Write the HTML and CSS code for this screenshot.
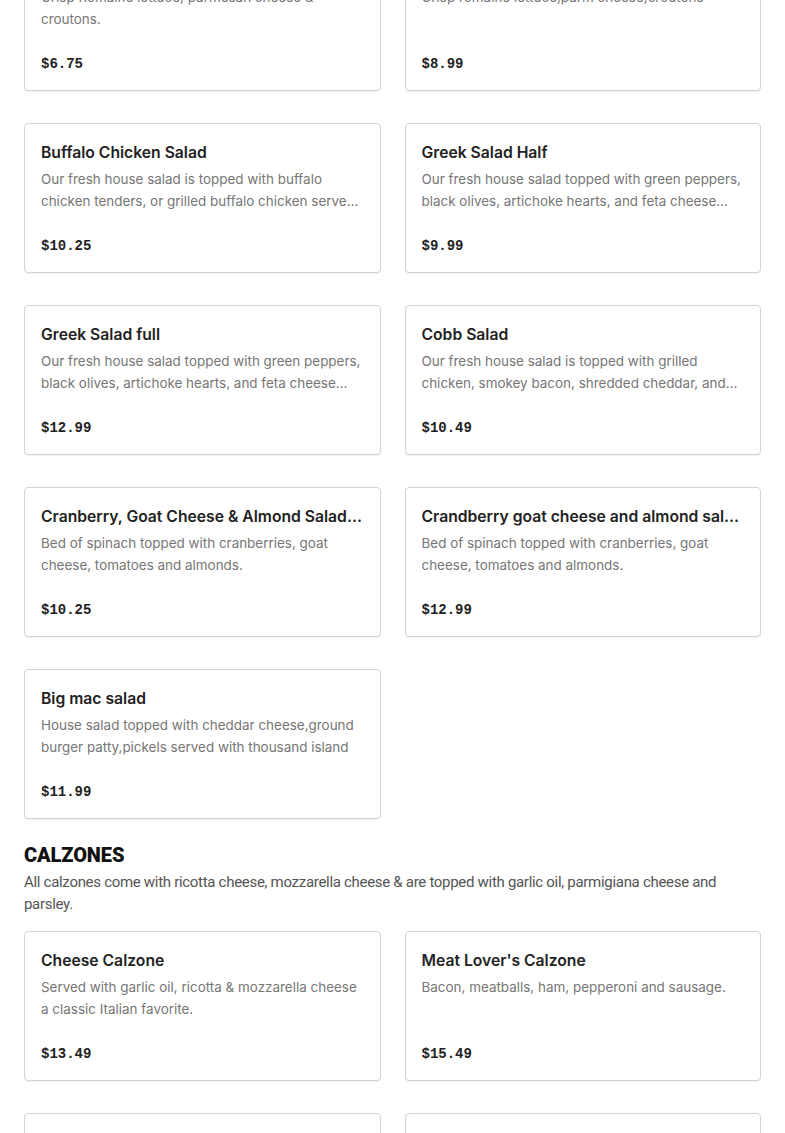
FILE: index.html
```html
<!DOCTYPE html>
<html>
<head>
<meta charset="utf-8">
<link rel="stylesheet" href="styles.css">
</head>
<body>
<main class="menu">
  <section class="section section-first">
    <div class="grid">
      <div class="card"><div class="title">Caesar Salad</div><div class="desc">Crisp Romaine lettuce, parmesan cheese &amp; croutons.</div><div class="price">$6.75</div></div>
      <div class="card"><div class="title">Caesar Salad Full</div><div class="desc">Crisp romaine lettuce,parm cheese,croutons</div><div class="price">$8.99</div></div>
      <div class="card"><div class="title">Buffalo Chicken Salad</div><div class="desc">Our fresh house salad is topped with buffalo chicken tenders, or grilled buffalo chicken served with blue cheese dressing.</div><div class="price">$10.25</div></div>
      <div class="card"><div class="title">Greek Salad Half</div><div class="desc">Our fresh house salad topped with green peppers, black olives, artichoke hearts, and feta cheese served with greek dressing.</div><div class="price">$9.99</div></div>
      <div class="card"><div class="title">Greek Salad full</div><div class="desc">Our fresh house salad topped with green peppers, black olives, artichoke hearts, and feta cheese served with greek dressing.</div><div class="price">$12.99</div></div>
      <div class="card"><div class="title">Cobb Salad</div><div class="desc">Our fresh house salad is topped with grilled chicken, smokey bacon, shredded cheddar, and hard boiled eggs.</div><div class="price">$10.49</div></div>
      <div class="card"><div class="title">Cranberry, Goat Cheese &amp; Almond Salad Half</div><div class="desc">Bed of spinach topped with cranberries, goat cheese, tomatoes and almonds.</div><div class="price">$10.25</div></div>
      <div class="card"><div class="title">Crandberry goat cheese and almond salad full</div><div class="desc">Bed of spinach topped with cranberries, goat cheese, tomatoes and almonds.</div><div class="price">$12.99</div></div>
      <div class="card"><div class="title">Big mac salad</div><div class="desc">House salad topped with cheddar cheese,ground burger patty,pickels served with thousand island</div><div class="price">$11.99</div></div>
    </div>
  </section>
  <section class="section">
    <h2 class="heading">CALZONES</h2>
    <p class="intro">All calzones come with ricotta cheese, mozzarella cheese &amp; are topped with garlic oil, parmigiana cheese and parsley.</p>
    <div class="grid">
      <div class="card"><div class="title">Cheese Calzone</div><div class="desc">Served with garlic oil, ricotta &amp; mozzarella cheese a classic Italian favorite.</div><div class="price">$13.49</div></div>
      <div class="card"><div class="title">Meat Lover's Calzone</div><div class="desc">Bacon, meatballs, ham, pepperoni and sausage.</div><div class="price">$15.49</div></div>
      <div class="card"><div class="title">Chicken Parm Calzone</div><div class="desc">Breaded chicken, marinara sauce and mozzarella cheese.</div><div class="price">$14.49</div></div>
      <div class="card"><div class="title">Buffalo Chicken Calzone</div><div class="desc">Buffalo chicken, ricotta and mozzarella cheese.</div><div class="price">$14.49</div></div>
    </div>
  </section>
</main>
</body>
</html>
```
FILE: styles.css
```css
* { box-sizing: border-box; }
html, body { margin: 0; padding: 0; background: #ffffff; }
body { font-family: Inter, "Liberation Sans", sans-serif; color: #2b2b2b; overflow: hidden; }
.menu { padding: 0 24px; }
.section-first { margin-top: -59px; }
.section { margin-bottom: 24px; }
.grid {
  display: grid;
  grid-template-columns: minmax(0, 1fr) minmax(0, 1fr);
  column-gap: 24px;
  row-gap: 32px;
}
.card {
  border: 1px solid #d4d4d4;
  border-radius: 4px;
  box-shadow: 0 1px 1px rgba(0,0,0,0.06);
  padding: 16px;
  height: 150px;
  display: flex;
  flex-direction: column;
  background: #fff;
  min-width: 0;
}
.title {
  font-size: 15.7px;
  font-weight: 600;
  line-height: 24px;
  padding-top: 1px;
  color: #222;
  white-space: nowrap;
  overflow: hidden;
  text-overflow: ellipsis;
}
.desc {
  margin-top: 3px;
  font-size: 13.45px;
  line-height: 22px;
  color: #767676;
  display: -webkit-box;
  -webkit-line-clamp: 2;
  -webkit-box-orient: vertical;
  overflow: hidden;
  height: 44px;
}
.price {
  margin-top: auto;
  font-family: "Liberation Mono", monospace;
  font-weight: 700;
  font-size: 14px;
  line-height: 20px;
  color: #222;
}
.heading {
  margin: 0;
  font-family: Roboto, "Liberation Sans", sans-serif;
  font-weight: 900;
  font-size: 20px;
  line-height: 24px;
  color: #111;
  letter-spacing: -0.1px;
}
.intro {
  margin: 4px 0 16px;
  font-family: Roboto, "Liberation Sans", sans-serif;
  font-size: 15px;
  line-height: 22px;
  color: #555;
  letter-spacing: -0.3px;
}
```
